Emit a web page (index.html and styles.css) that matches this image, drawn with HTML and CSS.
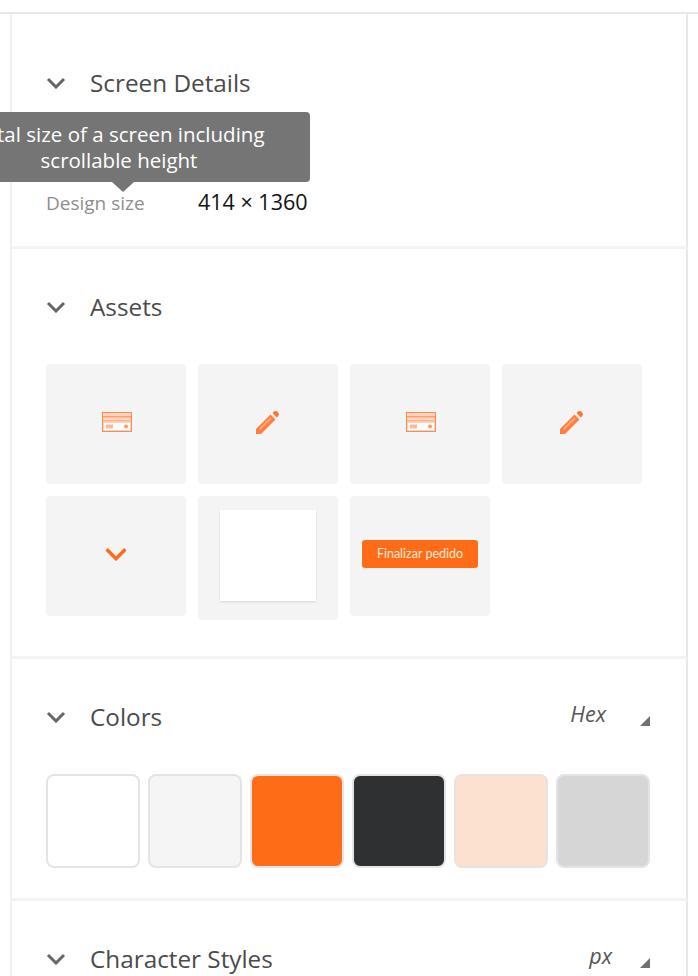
FILE: index.html
```html
<!DOCTYPE html>
<html>
<head>
    <title>Screen Details</title>
    <link rel="stylesheet" href="styles.css">
</head>
<body>
    <svg class="icon-defs" width="0" height="0">
        <symbol id="chevron" viewBox="0 0 20 12">
            <path d="M2 2l8 8 8-8" fill="none" stroke="currentColor" stroke-width="3"/>
        </symbol>
        <symbol id="card" viewBox="0 0 30 20">
            <rect x="0.500" y="0.500" width="29" height="19" fill="#ffd5bf" stroke="#ff8a4d"/>
            <rect x="1" y="4" width="28" height="1.500" fill="#ff9f70"/>
            <rect x="1" y="8" width="28" height="1.500" fill="#ffb48e"/>
            <rect x="2" y="11" width="26" height="7" fill="#fff"/>
            <rect x="4" y="12.500" width="7" height="4" fill="#ffb896"/>
            <circle cx="24" cy="14.500" r="2" fill="#ff9a66"/>
        </symbol>
        <symbol id="pencil" viewBox="0 0 26 26">
            <path d="M1 25v-5L15.500 5.500l5 5L6 25z" fill="#ff7f3f"/>
            <path d="M5 20L16 9" stroke="#ffb48e" stroke-width="1.500"/>
            <path d="M19 2.500a3.300 3.300 0 0 1 4.500 4.500L22 8.500 17.500 4z" fill="#ff7433"/>
        </symbol>
    </svg>

    <div class="panel">
        <section class="section section-first">
            <div class="section-head">
                <svg class="chevron"><use href="#chevron"/></svg>
                <h2>Screen Details</h2>
            </div>
            <div class="detail-row">
                <span class="detail-label">Design size</span>
                <span class="detail-value">414 × 1360</span>
                <div class="tooltip">Total size of a screen including<br>scrollable height</div>
            </div>
        </section>

        <section class="section section-assets">
            <div class="section-head">
                <svg class="chevron"><use href="#chevron"/></svg>
                <h2>Assets</h2>
            </div>
            <div class="asset-grid">
                <div class="asset"><svg class="asset-card"><use href="#card"/></svg></div>
                <div class="asset"><svg class="asset-pencil"><use href="#pencil"/></svg></div>
                <div class="asset"><svg class="asset-card"><use href="#card"/></svg></div>
                <div class="asset"><svg class="asset-pencil"><use href="#pencil"/></svg></div>
                <div class="asset"><svg class="asset-chevron"><use href="#chevron"/></svg></div>
                <div class="asset asset-tall"><div class="asset-blank"></div></div>
                <div class="asset"><div class="asset-button">Finalizar pedido</div></div>
            </div>
        </section>

        <section class="section section-colors">
            <div class="section-head">
                <svg class="chevron"><use href="#chevron"/></svg>
                <h2>Colors</h2>
                <span class="unit">Hex</span>
                <span class="corner"></span>
            </div>
            <div class="swatches">
                <div class="swatch swatch-white"></div>
                <div class="swatch swatch-light"></div>
                <div class="swatch swatch-orange"></div>
                <div class="swatch swatch-dark"></div>
                <div class="swatch swatch-peach"></div>
                <div class="swatch swatch-grey"></div>
            </div>
        </section>

        <section class="section section-last">
            <div class="section-head">
                <svg class="chevron"><use href="#chevron"/></svg>
                <h2>Character Styles</h2>
                <span class="unit unit-px">px</span>
                <span class="corner"></span>
            </div>
        </section>
    </div>
</body>
</html>
```

FILE: styles.css
```css
html, body {
    height: 976px;
    overflow: hidden;
}

body {
    margin: 0;
    background: white;
    font-family: "Open Sans", "Noto Sans", sans-serif;
    color: #4b4b4b;
}

.icon-defs {
    display: block;
    height: 0;
}

.panel {
    margin-top: 12px;
    padding: 0 10px 0 10px;
}

.panel::before {
    content: "";
    display: block;
    height: 2px;
    margin: 0 -10px;
    background: #e8e8e8;
}

.section {
    border-left: 2px solid #f0f0f0;
    border-right: 2px solid #e8e8e8;
    border-bottom: 3px solid #f3f3f3;
    padding: 43px 0 0 34px;
}

.section-first {
    padding-top: 54px;
    height: 178px;
}

.section-assets {
    height: 364px;
}

.section-colors {
    height: 196px;
}

.section-last {
    padding-bottom: 30px;
}

.section-head {
    display: flex;
    align-items: center;
    height: 30px;
    padding-right: 36px;
}

.section-head h2 {
    margin: -2px 0 0;
    font-size: 24.300px;
    font-weight: 400;
    flex: 1;
}

.chevron {
    width: 20px;
    height: 12px;
    margin-right: 24px;
    color: #666;
}

.unit {
    font-size: 21.500px;
    font-style: italic;
    margin-right: 34px;
    margin-top: -8px;
    color: #555;
}

.unit-px {
    margin-right: 28px;
}

.corner {
    width: 0;
    height: 0;
    margin-top: 7px;
    border-left: 10px solid transparent;
    border-bottom: 10px solid #707070;
}

.detail-row {
    display: flex;
    align-items: center;
    position: relative;
    margin-top: 90px;
    height: 30px;
}

.detail-label {
    width: 152px;
    font-size: 19px;
    color: #8e8e8e;
}

.detail-value {
    margin-top: -4px;
    font-size: 21.500px;
    color: #111;
}

.tooltip {
    position: absolute;
    left: -110px;
    bottom: 36px;
    width: 374px;
    height: 70px;
    box-sizing: border-box;
    padding: 9px 8px 0 0;
    background: #757575;
    border-radius: 4px;
    color: white;
    font-size: 20.500px;
    line-height: 26px;
    text-align: center;
}

.tooltip::after {
    content: "";
    position: absolute;
    left: 176px;
    top: 70px;
    border-left: 11px solid transparent;
    border-right: 11px solid transparent;
    border-top: 10px solid #757575;
}

.asset-grid {
    display: grid;
    grid-template-columns: repeat(4, 140px);
    grid-auto-rows: 120px;
    gap: 12px;
    margin-top: 42px;
}

.asset {
    display: flex;
    align-items: center;
    justify-content: center;
    background: #f4f4f4;
    border-radius: 4px;
}

.asset-tall {
    height: 124px;
}

.asset-card {
    width: 30px;
    height: 20px;
    margin: -5px 0 0 2px;
}

.asset-pencil {
    width: 26px;
    height: 26px;
    margin-top: -5px;
}

.asset-chevron {
    width: 24px;
    height: 14px;
    margin-top: -4px;
    color: #ff6c17;
}

.asset-blank {
    width: 96px;
    height: 91px;
    margin-top: -6px;
    background: white;
    box-shadow: 0 1px 2px rgba(0, 0, 0, 0.12);
}

.asset-button {
    width: 116px;
    height: 28px;
    margin-top: -4px;
    line-height: 28px;
    background: #ff6c17;
    border-radius: 3px;
    color: #ffe9dc;
    font-family: "Lato", sans-serif;
    font-size: 12.500px;
    text-align: center;
}

.swatches {
    display: flex;
    gap: 8px;
    margin-top: 42px;
}

.swatch {
    width: 94px;
    height: 94px;
    box-sizing: border-box;
    border: 2px solid #e4e4e4;
    border-radius: 8px;
}

.swatch-white {
    background: white;
}

.swatch-light {
    background: #f5f5f5;
}

.swatch-orange {
    background: #ff6c17;
}

.swatch-dark {
    background: #2f3032;
}

.swatch-peach {
    background: #fde1d0;
}

.swatch-grey {
    background: #d6d6d6;
}
```
